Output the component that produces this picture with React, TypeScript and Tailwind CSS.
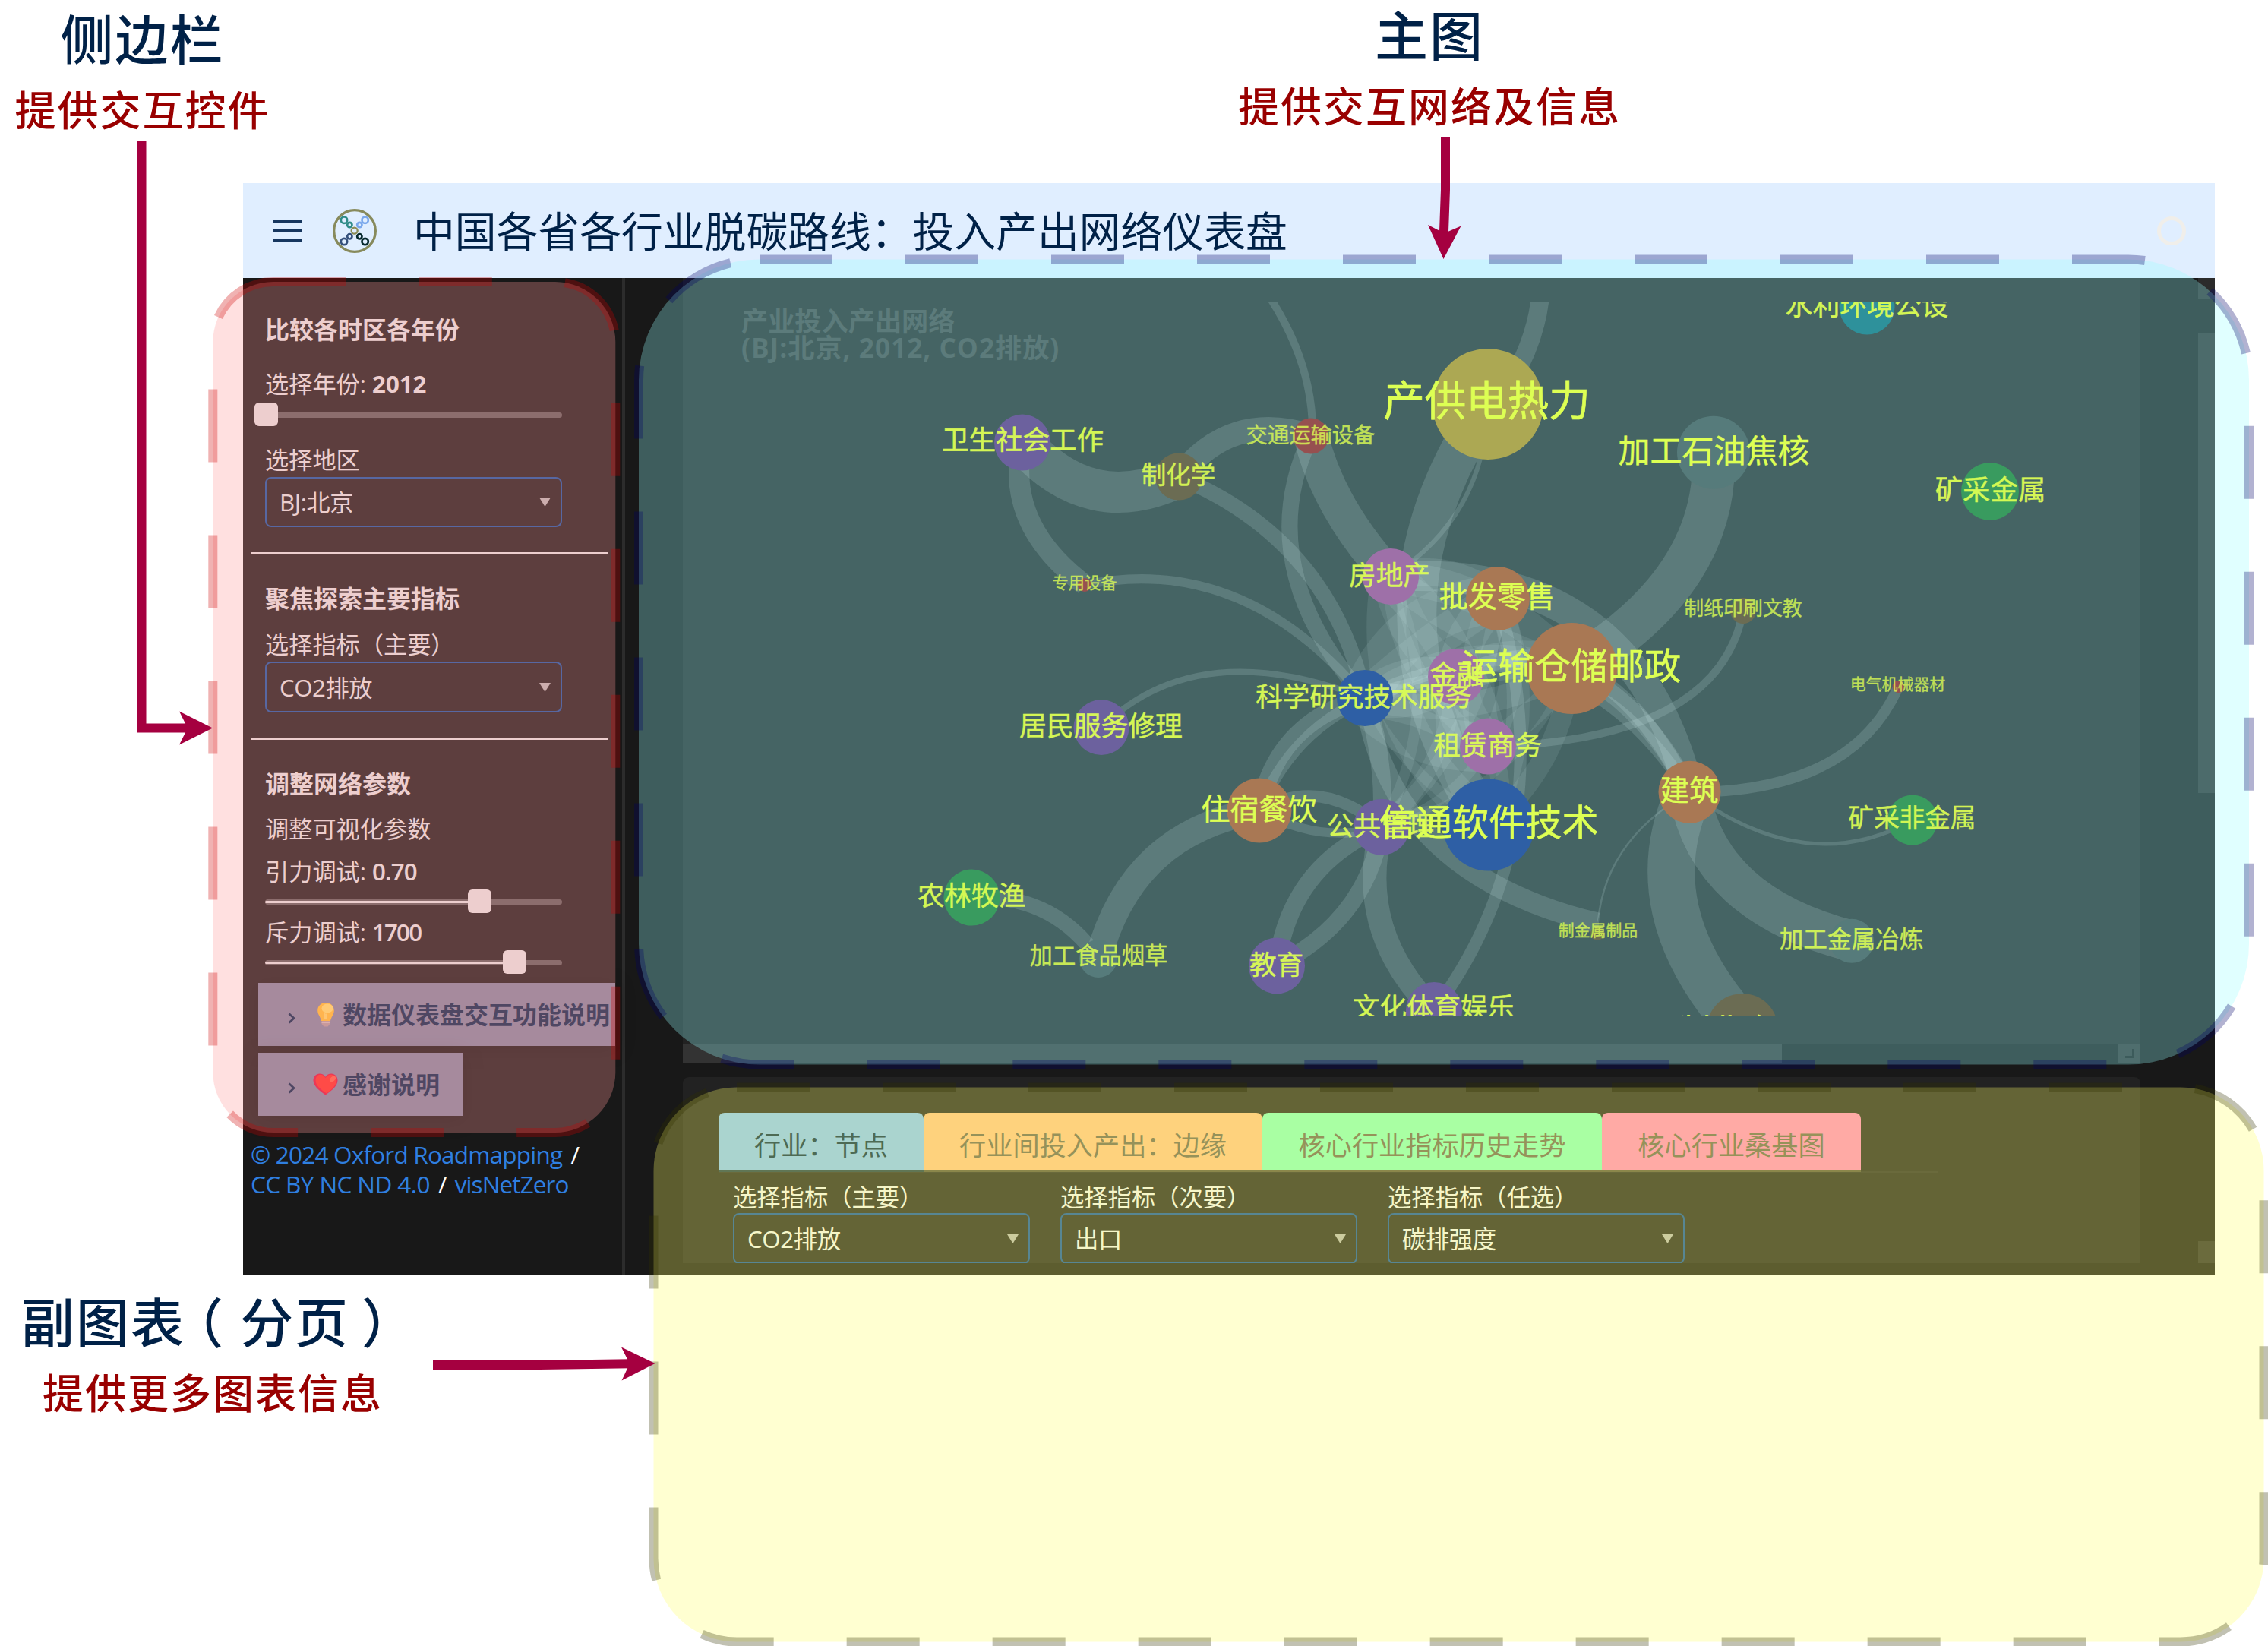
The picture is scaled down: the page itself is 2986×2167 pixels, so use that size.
import React from "react";

const SANS = "font-['Open_Sans','Noto_Sans_CJK_SC',sans-serif]";

type GraphNode = {
  x: number;
  y: number;
  r: number;
  fill: string;
  label: string;
  size: number;
  tx: number;
  ty: number;
  dim?: number;
};

const PURPLE = "#591e74";
const PINK = "#a13383";
const ORANGE = "#b03e0b";
const BLUE = "#001a7e";
const GREEN = "#11701a";
const BROWN = "#582d09";
const GRAY = "#3a4342";
const RED = "#950505";

const nodes: GraphNode[] = [
  { x: 2256, y: 595.7, r: 48, fill: GRAY, label: "加工石油焦核", size: 42, tx: 2256.5, ty: 594.4 },
  { x: 2438, y: 1238.8, r: 29, fill: GRAY, label: "加工金属冶炼", size: 31.6, tx: 2437.5, ty: 1237.5, dim: 0.88 },
  { x: 1446, y: 1262, r: 25, fill: GRAY, label: "加工食品烟草", size: 30.3, tx: 1446.5, ty: 1259, dim: 0.86 },
  { x: 1346, y: 582.6, r: 37, fill: PURPLE, label: "卫生社会工作", size: 35.5, tx: 1346.5, ty: 580, dim: 0.94 },
  { x: 1552, y: 627.5, r: 31, fill: BROWN, label: "制化学", size: 32.6, tx: 1551.5, ty: 626.5, dim: 0.9 },
  { x: 1726, y: 574, r: 23.5, fill: RED, label: "交通运输设备", size: 28.3, tx: 1725.5, ty: 573.5, dim: 0.8 },
  { x: 1428, y: 770, r: 9, fill: RED, label: "专用设备", size: 21.2, tx: 1428, ty: 768, dim: 0.8 },
  { x: 1831, y: 759, r: 37, fill: PINK, label: "房地产", size: 35.7, tx: 1829.5, ty: 758, dim: 0.94 },
  { x: 1797, y: 919, r: 37, fill: BLUE, label: "科学研究技术服务", size: 35.6, tx: 1795.5, ty: 917.5, dim: 0.94 },
  { x: 1972, y: 788, r: 42, fill: ORANGE, label: "批发零售", size: 38.1, tx: 1971, ty: 786 },
  { x: 1917, y: 891, r: 37, fill: PINK, label: "金融", size: 35.6, tx: 1918, ty: 889, dim: 0.94 },
  { x: 1959, y: 982.6, r: 37, fill: PINK, label: "租赁商务", size: 35.7, tx: 1958.5, ty: 981.5, dim: 0.94 },
  { x: 2069.4, y: 880, r: 60, fill: ORANGE, label: "运输仓储邮政", size: 48.2, tx: 2068.5, ty: 877 },
  { x: 1819, y: 1088.7, r: 37, fill: PURPLE, label: "公共管理", size: 35.6, tx: 1818, ty: 1087.5, dim: 0.94 },
  { x: 1960, y: 1086, r: 60.5, fill: BLUE, label: "信通软件技术", size: 48.2, tx: 1960, ty: 1083 },
  { x: 1658, y: 1067, r: 42.5, fill: ORANGE, label: "住宿餐饮", size: 38.2, tx: 1657.5, ty: 1066 },
  { x: 1681, y: 1271.4, r: 37, fill: PURPLE, label: "教育", size: 35.6, tx: 1680.5, ty: 1271, dim: 0.94 },
  { x: 1888, y: 1330, r: 37, fill: PURPLE, label: "文化体育娱乐", size: 35.5, tx: 1887.5, ty: 1327, dim: 0.94 },
  { x: 2103, y: 1229, r: 9, fill: BROWN, label: "制金属制品", size: 20.9, tx: 2104, ty: 1226, dim: 0.8 },
  { x: 2224.5, y: 1042.8, r: 41, fill: ORANGE, label: "建筑", size: 38.2, tx: 2224, ty: 1041 },
  { x: 2295, y: 804, r: 17, fill: BROWN, label: "制纸印刷文教", size: 25.9, tx: 2295, ty: 802, dim: 0.8 },
  { x: 2620, y: 647, r: 38, fill: GREEN, label: "矿采金属", size: 36.4, tx: 2620.5, ty: 645.5, dim: 0.94 },
  { x: 1959, y: 532, r: 73, fill: "#b58309", label: "产供电热力", size: 54.5, tx: 1957.5, ty: 528 },
  { x: 2458, y: 404, r: 36.5, fill: "#006270", label: "水利环境公设", size: 35.8, tx: 2458, ty: 403, dim: 0.94 },
  { x: 2499.5, y: 904, r: 8, fill: RED, label: "电气机械器材", size: 20.9, tx: 2498.5, ty: 902, dim: 0.8 },
  { x: 2518, y: 1079.6, r: 33, fill: GREEN, label: "矿采非金属", size: 33.6, tx: 2517.5, ty: 1078, dim: 0.92 },
  { x: 2294, y: 1355, r: 47, fill: BROWN, label: "制非金属", size: 42.4, tx: 2294, ty: 1357 },
  { x: 1450, y: 957.6, r: 36.5, fill: PURPLE, label: "居民服务修理", size: 35.8, tx: 1449.5, ty: 957, dim: 0.94 },
  { x: 1279.4, y: 1181.6, r: 37, fill: GREEN, label: "农林牧渔", size: 35.7, tx: 1279, ty: 1180, dim: 0.94 },
];

// Outer links: path and stroke width.
const links: [string, number][] = [
  ["M1346 583Q1436 684 1552 628", 54],
  ["M1346 583Q1322 690 1428 770", 27],
  ["M1552 628Q1620 540 1726 574", 31],
  ["M1552 628Q1752 712 1797 919", 20],
  ["M1726 574Q1748 668 1831 759", 46],
  ["M1726 574Q1645 745 1797 919", 21],
  ["M1664 380Q1730 475 1728 574", 10],
  ["M1428 770Q1637 727 1797 919", 12],
  ["M1450 958Q1576 834 1797 919", 8],
  ["M1959 532Q1771 809 1960 1086", 52],
  ["M1959 532Q1955 680 1831 759", 6],
  ["M2028 390Q2022 450 1985 510", 24],
  ["M2256 596Q2263 766 2069 880", 56],
  ["M2295 804Q2264 975 1959 983", 10],
  ["M2499.5 904Q2438 1043 2224 1043", 14],
  ["M2224 1043Q2379 1157 2518 1080", 5],
  ["M2224 1043Q2249 1191 2438 1239", 54],
  ["M2224 1043Q2153 1198 2294 1354", 62],
  ["M2224 1043Q2106 1110 2103 1229", 2.5],
  ["M1797 919Q1830 1150 2103 1215", 27],
  ["M1819 1089Q1698 1140 1681 1271", 23],
  ["M1819 1089Q1800 1210 1681 1271", 22],
  ["M1819 1089Q1783 1225 1888 1330", 31],
  ["M1972 788Q2060 1100 1888 1330", 16],
  ["M1797 919Q1680 950 1658 1067", 24],
  ["M1917 891Q1720 910 1658 1067", 16],
  ["M1658 1067Q1490 1095 1446 1262", 35],
  ["M1279 1182Q1385 1175 1446 1262", 20],
  ["M1658 1067Q1738 1020 1819 1089", 15],
  ["M1658 1067Q1738 1112 1819 1089", 12],
  ["M1797 919Q1825 1000 1819 1089", 24],
  ["M1831 759Q2150 740 2224 1043", 40],
  ["M1917 891Q2100 800 2224 1043", 22],
  ["M1797 919Q2060 790 2224 1043", 18],
  ["M2069 880Q2170 930 2224 1043", 24],
];

// Links inside the dense core: from, to, bend relative to length, width.
const core: Record<string, [number, number]> = {
  fang: [1831, 759],
  pi: [1972, 788],
  jin: [1917, 891],
  ke: [1797, 919],
  zu: [1959, 983],
  xin: [1960, 1086],
  yun: [2069, 880],
  gong: [1819, 1089],
};

const coreLinks: [string, string, number, number][] = [
  ["fang", "xin", 0.3, 52],
  ["fang", "pi", -0.25, 36],
  ["fang", "jin", 0.2, 50],
  ["fang", "zu", -0.15, 56],
  ["fang", "zu", 0.25, 24],
  ["fang", "gong", -0.25, 14],
  ["fang", "yun", -0.2, 44],
  ["fang", "yun", 0.1, 40],
  ["ke", "pi", -0.3, 64],
  ["ke", "pi", -0.05, 48],
  ["pi", "jin", 0.2, 50],
  ["pi", "zu", -0.25, 30],
  ["pi", "zu", 0.2, 44],
  ["pi", "xin", -0.22, 30],
  ["pi", "gong", -0.2, 22],
  ["yun", "jin", 0.22, 50],
  ["yun", "ke", 0.25, 28],
  ["yun", "ke", -0.2, 32],
  ["yun", "zu", -0.1, 34],
  ["yun", "xin", -0.2, 28],
  ["yun", "gong", -0.25, 10],
  ["jin", "ke", 0.25, 44],
  ["jin", "ke", -0.25, 44],
  ["jin", "zu", 0.25, 60],
  ["jin", "xin", 0.22, 44],
  ["jin", "gong", -0.2, 22],
  ["ke", "zu", 0.22, 66],
  ["ke", "zu", -0.15, 48],
  ["ke", "xin", 0.15, 14],
  ["zu", "xin", -0.3, 24],
  ["zu", "gong", -0.2, 14],
  ["xin", "gong", 0.3, 12],
];

function bend(a: [number, number], b: [number, number], k: number) {
  const dx = b[0] - a[0];
  const dy = b[1] - a[1];
  const cx = (a[0] + b[0]) / 2 - dy * k;
  const cy = (a[1] + b[1]) / 2 + dx * k;
  return `M${a[0]} ${a[1]}Q${cx} ${cy} ${b[0]} ${b[1]}`;
}

function Network() {
  return (
    <svg
      className="absolute left-0 top-[32px] h-[939px] w-[1919px] overflow-hidden"
      viewBox="899 398 1919 939"
    >
      <g fill="none" stroke="#ffffff" strokeOpacity={0.15}>
        {links.map(([d, w], i) => (
          <path key={i} d={d} strokeWidth={w} />
        ))}
        {coreLinks.map(([a, b, k, w], i) => (
          <path key={i} d={bend(core[a], core[b], k)} strokeWidth={w} strokeOpacity={0.09} />
        ))}
      </g>
      {nodes.map((n) => (
        <circle key={n.label} cx={n.x} cy={n.y} r={n.r} fill={n.fill} />
      ))}
      {nodes.map((n) => (
        <text
          key={n.label}
          x={n.tx}
          y={n.ty + n.size * 0.38 - 1.5}
          fontSize={n.size}
          textAnchor="middle"
          fill="#fbff0a"
          stroke="#fbff0a"
          strokeWidth={n.size * 0.012}
          opacity={n.dim ?? 1}
          className={SANS}
        >
          {n.label}
        </text>
      ))}
    </svg>
  );
}

function Caret() {
  return (
    <svg className="h-[12px] w-[15px]" viewBox="0 0 15 12">
      <path d="M0 0H15L7.5 12Z" fill="#b6b6b6" />
    </svg>
  );
}

function Select({ value, className }: { value: string; className: string }) {
  return (
    <div
      className={`flex w-[391px] items-center justify-between rounded-[8px] border-2 border-[#0f52a6] pr-[13px] pl-[17px] ${className}`}
    >
      <span className="tracking-[-0.4px]">{value}</span>
      <Caret />
    </div>
  );
}

function Slider({ pos, className }: { pos: number; className: string }) {
  return (
    <div className={`relative flex h-[32px] w-[391px] items-center ${className}`}>
      <div className="h-[7px] w-full overflow-hidden rounded-full bg-[#5b5b5b]">
        <div className="mt-[2px] h-[3.5px] rounded-full bg-[#e6e6e6]" style={{ width: pos }} />
      </div>
      <div
        className="absolute top-0 h-[31px] w-[31px] rounded-[6px] bg-[#e6e6e6]"
        style={{ left: pos - 15.5 }}
      />
    </div>
  );
}

function Logo() {
  return (
    <svg className="h-[60px] w-[60px]" viewBox="261 30 180 180" fill="none">
      <circle cx="351" cy="120" r="82" stroke="#878a5c" strokeWidth="10" />
      <g strokeWidth="8">
        <g stroke="#2f8b87">
          <circle cx="309" cy="77" r="12.500" />
          <circle cx="331" cy="96" r="9.500" />
        </g>
        <g stroke="#7aa8ec">
          <circle cx="392" cy="77" r="12.500" />
          <circle cx="370" cy="96" r="9.500" />
        </g>
        <g stroke="#34507c">
          <circle cx="309" cy="162" r="12.500" />
          <circle cx="331" cy="142" r="9.500" />
        </g>
        <g stroke="#06282c">
          <circle cx="392" cy="162" r="12.500" />
          <circle cx="370" cy="142" r="9.500" />
        </g>
        <circle cx="350" cy="119" r="12" stroke="#8b8c56" strokeWidth="7" />
      </g>
    </svg>
  );
}

function Bulb() {
  return (
    <svg className="h-[32px] w-[24px]" viewBox="0 0 24 32">
      <path
        d="M12 0C5.500 0 1.200 4.600 1.200 10.400c0 5 3.600 7.600 4.800 13.600h12c1.200-6 4.800-8.600 4.800-13.600C22.800 4.600 18.500 0 12 0Z"
        fill="#ffc02e"
      />
      <ellipse cx="14" cy="7.500" rx="7.500" ry="6" fill="#ffe066" />
      <path d="M10 13l2 2 2-2v9h-4Z" fill="#ffd860" />
      <path d="M6.500 24h11v4l-3 3.500h-5l-3-3.500Z" fill="#b09a9c" />
      <path d="M6.500 25.500h11v1.500h-11Z" fill="#cbb9bb" />
    </svg>
  );
}

function Heart() {
  return (
    <svg className="h-[29px] w-[33px]" viewBox="0 0 33 29">
      <path
        d="M16.500 28.500C8 22.500 0.500 16.500 0.500 9.200 0.500 4 4.200 0.500 8.800 0.500c3.200 0 6.100 1.600 7.700 4.200C18.100 2.100 21 0.500 24.200 0.500c4.600 0 8.300 3.500 8.300 8.700 0 7.300-7.500 13.300-16 19.300Z"
        fill="#e20f3c"
      />
      <path
        d="M18 26.500C10 21 3.500 16 3.500 9.500 3.500 5 6 2 9.500 1.800c3 0 5.500 1.500 7 4.300 2-3 4.500-4.400 7.500-4.400 4 0 7.200 3 7.200 7.300C31.200 15.500 25 21.500 18 26.500Z"
        fill="#ff2a24"
      />
      <ellipse cx="26" cy="7.500" rx="4.500" ry="3" transform="rotate(-40 26 7.500)" fill="#ff5a44" />
    </svg>
  );
}

function Chevron() {
  return (
    <svg className="mt-[9px] h-[15px] w-[10px]" viewBox="0 0 10 15" fill="none">
      <path d="M1.500 1.500L8 7.500 1.500 13.500" stroke="#03244c" strokeWidth="2.800" />
    </svg>
  );
}

function Sidebar() {
  return (
    <aside className="flex w-[503px] shrink-0 flex-col items-start border-r-4 border-[#2c2c2c] pt-[48px] pl-[29px] text-[31.2px] leading-[40px] whitespace-nowrap text-[#e6e6e6]">
      <h3 className="text-[32px] font-bold">比较各时区各年份</h3>
      <p className="mt-[31px]">
        选择年份: <b>2012</b>
      </p>
      <Slider pos={1.5} className="mt-[5px]" />
      <p className="mt-[23px]">选择地区</p>
      <Select value="BJ:北京" className="mt-[3px] h-[66px]" />
      <div className="mt-[33px] -ml-[19px] h-[3px] w-[470px] bg-[#e6e6e6]" />

      <h3 className="mt-[38px] text-[32px] font-bold">聚焦探索主要指标</h3>
      <p className="mt-[20px]">选择指标（主要）</p>
      <Select value="CO2排放" className="mt-[3px] h-[67px]" />
      <div className="mt-[33px] -ml-[19px] h-[3px] w-[470px] bg-[#e6e6e6]" />

      <h3 className="mt-[38px] text-[32px] font-bold">调整网络参数</h3>
      <p className="mt-[19px]">调整可视化参数</p>
      <p className="mt-[16px]">
        引力调试: <span className="font-semibold tracking-[-0.8px]">0.70</span>
      </p>
      <Slider pos={282} className="mt-[4px]" />
      <p className="mt-[4px]">
        斥力调试: <span className="font-semibold tracking-[-1.8px]">1700</span>
      </p>
      <Slider pos={328} className="mt-[4px]" />

      <button className="mt-[11px] -ml-[9px] flex h-[83px] w-[470px] items-center bg-[#8085a0] pl-[39px] text-[32px] font-semibold text-[#03244c] shadow-[0_4px_24px_rgba(0,0,0,0.25)]">
        <Chevron />
        <span className="ml-[28px] flex w-[24px]">
          <Bulb />
        </span>
        <span className="ml-[10px]">数据仪表盘交互功能说明</span>
      </button>
      <button className="mt-[9px] -ml-[9px] flex h-[83px] w-[270px] items-center bg-[#8085a0] pl-[39px] text-[32px] font-semibold text-[#03244c] shadow-[0_4px_24px_rgba(0,0,0,0.25)]">
        <Chevron />
        <span className="ml-[23px] flex w-[33px]">
          <Heart />
        </span>
        <span className="ml-[6px]">感谢说明</span>
      </button>

      <p className="mt-[31px] -ml-[19px] text-[31.5px] leading-[39px] text-white">
        <a className="tracking-[-0.8px] text-[#2f7fe0]">© 2024 Oxford Roadmapping</a>
        <span className="ml-[3px]"> /</span>
        <br />
        <a className="tracking-[-0.6px] text-[#2f7fe0]">CC BY NC ND 4.0</a>
        <span className="ml-[3px]"> / </span>
        <a className="ml-[2px] tracking-[-0.9px] text-[#2f7fe0]">visNetZero</a>
      </p>
    </aside>
  );
}

function MainArea() {
  return (
    <main className="flex w-[2071px] flex-col pl-[76px]">
      <section className="relative h-[1009px] w-[1919px] bg-[#222222] pt-[39px] pl-[77px]">
        <h2 className="text-[35.2px] leading-[35px] font-bold whitespace-nowrap text-[#434343]">
          产业投入产出网络
          <br />
          <span className="tracking-[1px]">(BJ:北京, 2012, CO2排放)</span>
        </h2>
        <Network />
      </section>
      <div className="flex h-[24px] w-[1919px] justify-between">
        <div className="h-full w-[1447px] bg-[#333333]" />
        <div className="flex h-full w-[29px] items-center justify-center bg-[#303030]">
          <div className="h-[12px] w-[12px] border-r-[3px] border-b-[3px] border-[#151515]" />
        </div>
      </div>

      <section className="mt-[19px] h-[245px] w-[1919px] overflow-hidden rounded-t-[8px] bg-[#222222] pt-[47px] pl-[47px] text-[35.2px] whitespace-nowrap">
        <div className="flex h-[79px] w-[1606px] border-b-[3px] border-[#2a2a2a] text-[#696455]">
          <div className="flex h-[78px] w-[270px] items-center justify-center rounded-t-[8px] border-b-[3px] border-[#1c3c4e] bg-[#86c2fc] pt-[9px] text-[#002a4c]">
            行业：节点
          </div>
          <div className="flex h-[78px] w-[446px] items-center justify-center rounded-t-[8px] border-b-[3px] border-[#5a5440] bg-[#febf87] pt-[9px]">
            行业间投入产出：边缘
          </div>
          <div className="flex h-[78px] w-[447px] items-center justify-center rounded-t-[8px] border-b-[3px] border-[#5a5440] bg-[#84ffbd] pt-[9px]">
            核心行业指标历史走势
          </div>
          <div className="flex h-[78px] w-[341px] items-center justify-center rounded-t-[8px] border-b-[3px] border-[#5a5440] bg-[#ff86c0] pt-[9px]">
            核心行业桑基图
          </div>
        </div>
        <div className="mt-[12px] ml-[19px] flex gap-[40px] text-[31.3px] leading-[40px] text-[#f3f3f3]">
          <div>
            <p>选择指标（主要）</p>
            <Select value="CO2排放" className="mt-px h-[67px]" />
          </div>
          <div>
            <p>选择指标（次要）</p>
            <Select value="出口" className="mt-px h-[67px]" />
          </div>
          <div>
            <p>选择指标（任选）</p>
            <Select value="碳排强度" className="mt-px h-[67px]" />
          </div>
        </div>
      </section>
    </main>
  );
}

function ScrollTrack() {
  return (
    <div className="flex w-[22px] flex-col">
      <div className="h-[28px] bg-[#2b2b2b]" />
      <div className="mt-[44px] h-[606px] bg-[#2b2b2b]" />
      <div className="mt-[590px] h-[29px] bg-[#2b2b2b]" />
    </div>
  );
}

function Annotations() {
  return (
    <svg
      className="pointer-events-none absolute inset-0 h-[2167px] w-[2986px]"
      viewBox="0 0 2986 2167"
      fill="none"
    >
      <g strokeWidth="12" strokeDasharray="96 96" strokeOpacity="0.3" fillOpacity="0.3">
        <rect x="280.300" y="371" width="530" height="1120" rx="79.500" fill="#ff9999" stroke="#cc0000" />
        <rect x="841" y="341.500" width="2120" height="1060" rx="159" fill="#99ffff" stroke="#000066" />
        <rect x="860.500" y="1431.500" width="2120" height="730" rx="109.500" fill="#ffff66" stroke="#333300" />
      </g>
      <g stroke="#a50040" strokeWidth="12">
        <path d="M186.500 186V958.500H250" />
        <path d="M1903 180V250L1900.800 310" />
        <path d="M570 1797H710L830 1795.200" />
      </g>
      <g fill="#a50040">
        <path d="M280 958.500L236 980.500L247 958.500L236 936.500Z" />
        <path d="M1900.500 341L1880 296L1901.500 307L1923.500 297.500Z" />
        <path d="M862.500 1795L818.500 1817.500L829 1795.200L818 1773.500Z" />
      </g>
    </svg>
  );
}

export default function App() {
  return (
    <div className={`relative flex h-[2167px] w-[2986px] flex-col overflow-hidden bg-white ${SANS}`}>
      <div className="flex h-[241px] whitespace-nowrap">
        <div className="flex w-[375px] flex-col items-center pt-[16px]">
          <h1 className="text-[70px] leading-[72px] font-medium tracking-[2px] text-[#002147]">侧边栏</h1>
          <p className="mt-[29px] text-[54px] leading-[56px] font-medium tracking-[2px] text-[#990000]">
            提供交互控件
          </p>
        </div>
        <div className="ml-[1206px] flex w-[602px] flex-col items-center pt-[11px]">
          <h1 className="text-[70px] leading-[72px] font-medium tracking-[2px] text-[#002147]">主图</h1>
          <p className="mt-[29px] text-[54px] leading-[56px] font-medium tracking-[2px] text-[#990000]">
            提供交互网络及信息
          </p>
        </div>
      </div>

      <div className="ml-[320px] flex h-[1437px] w-[2596px] flex-col bg-[#181818]">
        <header className="flex h-[125px] shrink-0 items-center bg-[#e0eeff] pr-[38px] pl-[39px]">
          <div className="flex w-[39px] flex-col gap-[8px]">
            <div className="h-[4px] bg-[#16365f]" />
            <div className="h-[4px] bg-[#16365f]" />
            <div className="h-[4px] bg-[#16365f]" />
          </div>
          <div className="ml-[39px]">
            <Logo />
          </div>
          <h1 className="ml-[47px] text-[54.8px] leading-[60px] whitespace-nowrap text-[#002147]">
            中国各省各行业脱碳路线：投入产出网络仪表盘
          </h1>
          <div className="ml-auto h-[38px] w-[38px] rounded-full border-[5px] border-[#f0eeea]" />
        </header>
        <div className="flex flex-1 overflow-hidden">
          <Sidebar />
          <MainArea />
          <ScrollTrack />
        </div>
      </div>

      <div className="flex w-[560px] flex-col items-center pt-[27px] whitespace-nowrap">
        <h1 className="text-[70px] leading-[72px] font-medium tracking-[2px] text-[#002147]">
          副图表<span className="relative -left-[20px]">（</span>分页
          <span className="relative left-[16px]">）</span>
        </h1>
        <p className="mt-[29px] text-[54px] leading-[56px] font-medium tracking-[2px] text-[#990000]">
          提供更多图表信息
        </p>
      </div>
      <Annotations />
    </div>
  );
}
